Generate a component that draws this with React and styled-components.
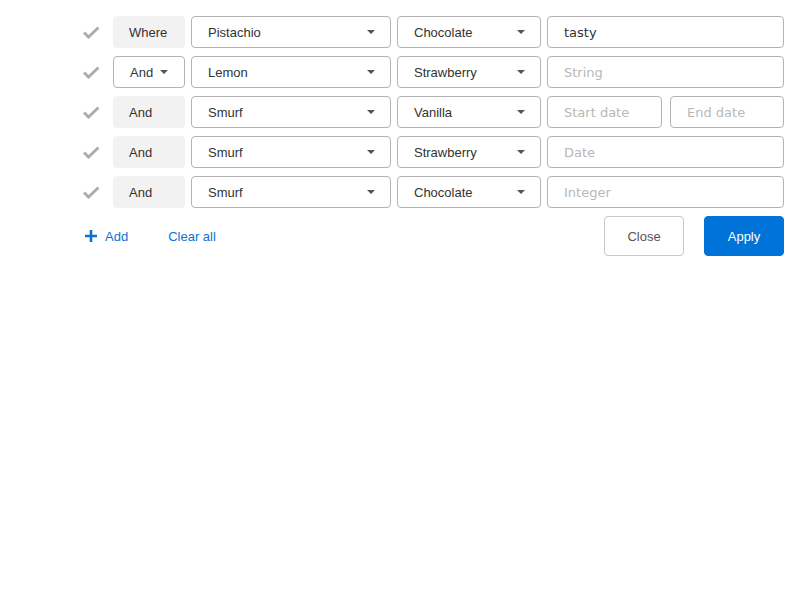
import React from "react";
import styled, { createGlobalStyle } from "styled-components";

const Global = createGlobalStyle`
  html, body { margin: 0; padding: 0; background: #fff; }
  body { font-family: "Liberation Sans", Arial, sans-serif; }
`;

const Panel = styled.div`
  padding: 16px 16px 0 80px;
  display: flex;
  flex-direction: column;
  gap: 8px;
`;

const Row = styled.div`
  display: flex;
  align-items: center;
  gap: 6px;
  height: 32px;
`;

const CheckCell = styled.div`
  box-sizing: border-box;
  width: 27px;
  height: 32px;
  padding-left: 3px;
  display: flex;
  align-items: center;
  justify-content: flex-start;
`;

const Conjunction = styled.div`
  box-sizing: border-box;
  width: 72px;
  height: 32px;
  border-radius: 4px;
  display: flex;
  align-items: center;
  justify-content: flex-start;
  gap: 7px;
  padding-left: ${(p) => (p.$select ? "16px" : "15px")};
  font-size: 13px;
  color: #333;
  background: ${(p) => (p.$select ? "#fff" : "#f2f2f2")};
  border: 1px solid ${(p) => (p.$select ? "#b3b3b3" : "#f2f2f2")};
`;

const Select = styled.div`
  box-sizing: border-box;
  width: ${(p) => p.$w}px;
  height: 32px;
  border: 1px solid #b3b3b3;
  border-radius: 4px;
  background: #fff;
  display: flex;
  align-items: center;
  justify-content: space-between;
  padding: 0 15px 0 16px;
  font-size: 13px;
  color: #333;
`;

const Input = styled.input`
  box-sizing: border-box;
  flex: ${(p) => (p.$w ? `0 0 ${p.$w}px` : "1 1 0")};
  width: ${(p) => (p.$w ? `${p.$w}px` : "0")};
  min-width: 0;
  height: 32px;
  border: 1px solid #b3b3b3;
  border-radius: 4px;
  background: #fff;
  padding: 0 16px;
  font-family: "DejaVu Sans", sans-serif;
  font-size: 13px;
  color: #333;
  outline: none;
  &::placeholder { color: #b8b8b8; }
`;

const DateGroup = styled.div`
  flex: 1;
  display: flex;
  gap: 8px;
`;

const Footer = styled.div`
  display: flex;
  align-items: center;
  height: 40px;
  padding-left: 5px;
`;

const LinkButton = styled.button`
  background: none;
  border: none;
  padding: 0;
  display: flex;
  align-items: center;
  gap: 8px;
  font-family: "Liberation Sans", Arial, sans-serif;
  font-size: 13px;
  color: #0b72d4;
  cursor: pointer;
  margin-right: ${(p) => p.$mr || 0}px;
`;

const Spacer = styled.div` flex: 1; `;

const Button = styled.button`
  box-sizing: border-box;
  width: 80px;
  height: 40px;
  border-radius: 4px;
  font-family: "Liberation Sans", Arial, sans-serif;
  font-size: 13px;
  cursor: pointer;
  margin-left: ${(p) => p.$ml || 0}px;
  background: ${(p) => (p.$primary ? "#0073d8" : "#fff")};
  color: ${(p) => (p.$primary ? "#fff" : "#555")};
  border: 1px solid ${(p) => (p.$primary ? "#0073d8" : "#c8c8c8")};
`;

const Check = () => (
  <svg width="17" height="13" viewBox="0 0 17 13">
    <path d="M1 6.5 L5.5 11 L15.5 1.5" fill="none" stroke="#adadad" strokeWidth="3" />
  </svg>
);

const Caret = () => (
  <svg width="8" height="4" viewBox="0 0 8 4">
    <path d="M0 0 H8 L4 4 Z" fill="#555" />
  </svg>
);

const Plus = () => (
  <svg width="12" height="12" viewBox="0 0 12 12">
    <path d="M6 0 V12 M0 6 H12" stroke="#0b72d4" strokeWidth="2.6" />
  </svg>
);

const rows = [
  { conj: "Where", field: "Pistachio", op: "Chocolate", value: { kind: "text", v: "tasty" } },
  { conj: "And", conjSelect: true, field: "Lemon", op: "Strawberry", value: { kind: "text", ph: "String" } },
  { conj: "And", field: "Smurf", op: "Vanilla", value: { kind: "range" } },
  { conj: "And", field: "Smurf", op: "Strawberry", value: { kind: "text", ph: "Date" } },
  { conj: "And", field: "Smurf", op: "Chocolate", value: { kind: "text", ph: "Integer" } },
];

export default function App() {
  return (
    <>
      <Global />
      <Panel>
        {rows.map((r, i) => (
          <Row key={i}>
            <CheckCell><Check /></CheckCell>
            <Conjunction $select={r.conjSelect}>
              <span>{r.conj}</span>
              {r.conjSelect && <Caret />}
            </Conjunction>
            <Select $w={200}>
              <span>{r.field}</span>
              <Caret />
            </Select>
            <Select $w={144}>
              <span>{r.op}</span>
              <Caret />
            </Select>
            {r.value.kind === "range" ? (
              <DateGroup>
                <Input $w={115} placeholder="Start date" readOnly />
                <Input placeholder="End date" readOnly />
              </DateGroup>
            ) : (
              <Input defaultValue={r.value.v} placeholder={r.value.ph} readOnly />
            )}
          </Row>
        ))}
        <Footer>
          <LinkButton $mr={40}><Plus />Add</LinkButton>
          <LinkButton>Clear all</LinkButton>
          <Spacer />
          <Button>Close</Button>
          <Button $primary $ml={20}>Apply</Button>
        </Footer>
      </Panel>
    </>
  );
}
